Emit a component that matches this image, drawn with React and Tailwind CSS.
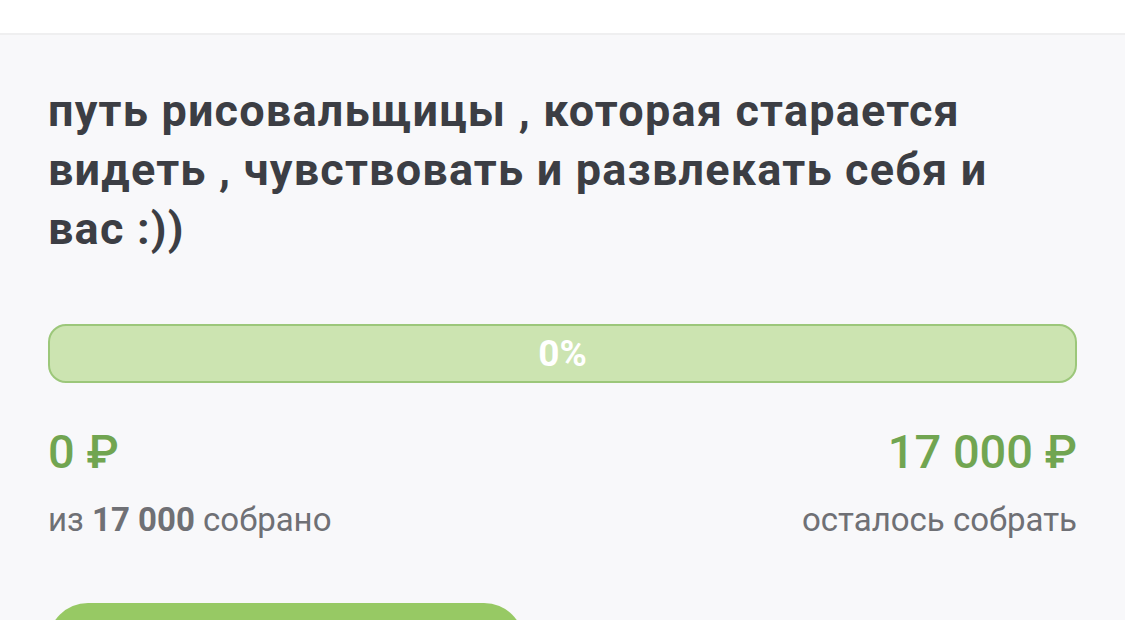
export default function App() {
  const collected = 0
  const goal = 17000
  const percent = Math.round((collected / goal) * 100)

  return (
    <div className="w-[1125px] h-[620px] overflow-hidden bg-white" style={{ fontFamily: "Roboto, 'Noto Sans', sans-serif" }}>
      <div className="h-[33px] bg-white" />
      <section className="h-[587px] bg-[#f8f8fa] border-t-2 border-[#efeff0] px-[48px] pt-[46px]">
        <h1 className="text-[45px] leading-[59px] tracking-[1.2px] font-bold text-[#3c3e44] pr-[40px]">
          путь рисовальщицы , которая старается видеть , чувствовать и развлекать себя и вас :))
        </h1>

        <div className="mt-[66px] h-[59px] rounded-[18px] border-2 border-[#9cc77a] bg-[#cce4b1] flex items-center justify-center">
          <span className="text-[37px] font-bold text-white">{percent}%</span>
        </div>

        <div className="mt-[43px] flex justify-between">
          <div className="flex flex-col">
            <span className="text-[47px] leading-[52px] font-medium text-[#71a551]">0 ₽</span>
            <span className="mt-[22px] text-[33px] leading-[40px] text-[#6f7075]">
              из <b className="font-bold">17 000</b> собрано
            </span>
          </div>
          <div className="flex flex-col items-end">
            <span className="text-[47px] leading-[52px] font-medium text-[#71a551]">17 000 ₽</span>
            <span className="mt-[22px] text-[33px] leading-[40px] text-[#6f7075]">осталось собрать</span>
          </div>
        </div>

        <button className="mt-[63px] w-[476px] h-[80px] rounded-[40px] bg-[#97c964]" />
      </section>
    </div>
  )
}
